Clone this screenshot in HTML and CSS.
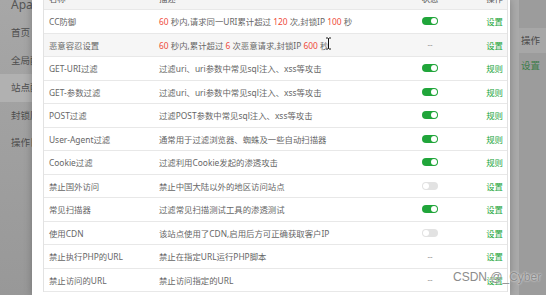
FILE: index.html
```html
<!DOCTYPE html>
<html lang="zh-CN">
<head>
<meta charset="utf-8">
<title>网站防火墙</title>
<link rel="stylesheet" href="styles.css">
</head>
<body>
<div class="page">
  <aside class="sidebar">
    <div class="brand">Apache防火墙</div>
    <div class="nav-item">首页</div>
    <div class="nav-item">全局配置</div>
    <div class="nav-item active">站点配置</div>
    <div class="nav-item">封锁历史</div>
    <div class="nav-item">操作日志</div>
  </aside>
  <main class="main">
    <div class="ucol">
      <div class="uhead">操作</div>
      <div class="urow">设置</div>
    </div>
  </main>
</div>

<div class="modal">
  <div class="tbl">
    <div class="row head">
      <div class="c-name">名称</div>
      <div class="c-desc">描述</div>
      <div class="c-state">状态</div>
      <div class="c-op">操作</div>
    </div>
    <div class="row">
      <div class="c-name">CC防御</div>
      <div class="c-desc"><span class="num">60</span> 秒内,请求同一URI累计超过 <span class="num">120</span> 次,封锁IP <span class="num">100</span> 秒</div>
      <div class="c-state"><span class="sw on"></span></div>
      <div class="c-op"><a class="lnk">设置</a></div>
    </div>
    <div class="row hover">
      <div class="c-name">恶意容忍设置</div>
      <div class="c-desc"><span class="num">60</span> 秒内,累计超过 <span class="num">6</span> 次恶意请求,封锁IP <span class="num">600</span> 秒</div>
      <div class="c-state"><span class="dash">--</span></div>
      <div class="c-op"><a class="lnk">设置</a></div>
    </div>
    <div class="row">
      <div class="c-name">GET-URI过滤</div>
      <div class="c-desc">过滤uri、uri参数中常见sql注入、xss等攻击</div>
      <div class="c-state"><span class="sw on"></span></div>
      <div class="c-op"><a class="lnk">规则</a></div>
    </div>
    <div class="row">
      <div class="c-name">GET-参数过滤</div>
      <div class="c-desc">过滤uri、uri参数中常见sql注入、xss等攻击</div>
      <div class="c-state"><span class="sw on"></span></div>
      <div class="c-op"><a class="lnk">规则</a></div>
    </div>
    <div class="row">
      <div class="c-name">POST过滤</div>
      <div class="c-desc">过滤POST参数中常见sql注入、xss等攻击</div>
      <div class="c-state"><span class="sw on"></span></div>
      <div class="c-op"><a class="lnk">规则</a></div>
    </div>
    <div class="row">
      <div class="c-name">User-Agent过滤</div>
      <div class="c-desc">通常用于过滤浏览器、蜘蛛及一些自动扫描器</div>
      <div class="c-state"><span class="sw on"></span></div>
      <div class="c-op"><a class="lnk">规则</a></div>
    </div>
    <div class="row">
      <div class="c-name">Cookie过滤</div>
      <div class="c-desc">过滤利用Cookie发起的渗透攻击</div>
      <div class="c-state"><span class="sw on"></span></div>
      <div class="c-op"><a class="lnk">规则</a></div>
    </div>
    <div class="row">
      <div class="c-name">禁止国外访问</div>
      <div class="c-desc">禁止中国大陆以外的地区访问站点</div>
      <div class="c-state"><span class="sw"></span></div>
      <div class="c-op"><a class="lnk">设置</a></div>
    </div>
    <div class="row">
      <div class="c-name">常见扫描器</div>
      <div class="c-desc">过滤常见扫描测试工具的渗透测试</div>
      <div class="c-state"><span class="sw on"></span></div>
      <div class="c-op"><a class="lnk">设置</a></div>
    </div>
    <div class="row">
      <div class="c-name">使用CDN</div>
      <div class="c-desc">该站点使用了CDN,启用后方可正确获取客户IP</div>
      <div class="c-state"><span class="sw"></span></div>
      <div class="c-op"><a class="lnk">设置</a></div>
    </div>
    <div class="row">
      <div class="c-name">禁止执行PHP的URL</div>
      <div class="c-desc">禁止在指定URL运行PHP脚本</div>
      <div class="c-state"><span class="dash">--</span></div>
      <div class="c-op"><a class="lnk">设置</a></div>
    </div>
    <div class="row">
      <div class="c-name">禁止访问的URL</div>
      <div class="c-desc">禁止访问指定的URL</div>
      <div class="c-state"><span class="dash">--</span></div>
      <div class="c-op"><a class="lnk">设置</a></div>
    </div>
  </div>
</div>

<svg class="cursor" width="7" height="13" viewBox="0 0 7 13">
  <path d="M1 1h2l0.5 0.5L4 1h2M3.5 1.5v10M1 12h2l0.5-0.5L4 12h2" fill="none" stroke="#fff" stroke-width="2"/>
  <path d="M1 1h2l0.5 0.5L4 1h2M3.5 1.5v10M1 12h2l0.5-0.5L4 12h2" fill="none" stroke="#111" stroke-width="1"/>
</svg>

<div class="watermark">CSDN @_Cyber</div>
</body>
</html>
```

FILE: styles.css
```css
* { box-sizing: border-box; }

body {
  margin: 0;
  width: 546px;
  height: 295px;
  overflow: hidden;
  position: relative;
  background: #9e9e9e;
  font-family: "Noto Sans", "Noto Sans CJK SC", sans-serif;
}

.page {
  display: flex;
  height: 295px;
}

.sidebar {
  width: 110px;
  flex: none;
  background: linear-gradient(#a7a7a7, #989898);
  color: #4e4e4e;
}

.brand {
  height: 19.25px;
  line-height: 10px;
  padding-left: 11px;
  font-size: 12px;
  color: #555;
  white-space: nowrap;
  overflow: hidden;
}

.nav-item {
  height: 27.5px;
  line-height: 27.5px;
  padding-left: 11px;
  font-size: 9.5px;
  white-space: nowrap;
}

.nav-item.active {
  background: #b1b1b1;
}

.main {
  flex: 1;
  display: flex;
  justify-content: flex-end;
  background: #ababab;
}

.ucol {
  width: 27px;
  background: #9c9c9c;
  padding-top: 28px;
  font-size: 9.5px;
}

.uhead {
  height: 25px;
  line-height: 25px;
  background: #a7a7a7;
  color: #4a4a4a;
  padding-left: 2px;
  white-space: nowrap;
}

.urow {
  height: 25px;
  line-height: 25px;
  color: #3c7d4a;
  padding-left: 2px;
  white-space: nowrap;
}

.modal {
  position: absolute;
  left: 32px;
  top: 0;
  width: 478px;
  height: 295px;
  background: #fff;
  overflow: hidden;
  padding-left: 11px;
  box-shadow: 0 0 8px rgba(0, 0, 0, 0.25);
}

.tbl {
  width: 465px;
  margin-top: -13.5px;
  border-left: 1px solid #e2e2e2;
  border-right: 1px solid #e2e2e2;
  font-size: 8.4px;
  color: #666;
}

.row {
  display: grid;
  grid-template-columns: 110px 246px 60px 47px;
  align-items: center;
  height: 23.5px;
  border-bottom: 1px solid #e8e8e8;
  white-space: nowrap;
}

.row.head {
  background: #f4f4f4;
  color: #555;
}

.row.hover {
  background: #f6f6f6;
}

.c-name { padding-left: 5px; }
.c-desc { padding-left: 5px; overflow: hidden; }
.c-state { display: flex; justify-content: center; align-items: center; }
.c-op { text-align: right; padding-right: 4px; }

.num { color: #ef4a3a; }

.lnk { color: #20a53a; }

.dash { color: #999; font-size: 8px; }

.sw {
  display: block;
  position: relative;
  width: 16px;
  height: 8px;
  border-radius: 4px;
  background: #e2e2e2;
}

.sw::after {
  content: "";
  position: absolute;
  top: 1px;
  left: 1px;
  width: 6px;
  height: 6px;
  border-radius: 50%;
  background: #fff;
}

.sw.on { background: #20a53a; }
.sw.on::after { left: auto; right: 1.5px; }

.cursor {
  position: absolute;
  left: 325px;
  top: 37px;
}

.watermark {
  position: absolute;
  left: 453px;
  top: 270px;
  font-family: "Liberation Sans", Arial, sans-serif;
  font-size: 12px;
  color: #8c8c8c;
  text-shadow: 0 0 2px #fff;
  white-space: nowrap;
}
```
